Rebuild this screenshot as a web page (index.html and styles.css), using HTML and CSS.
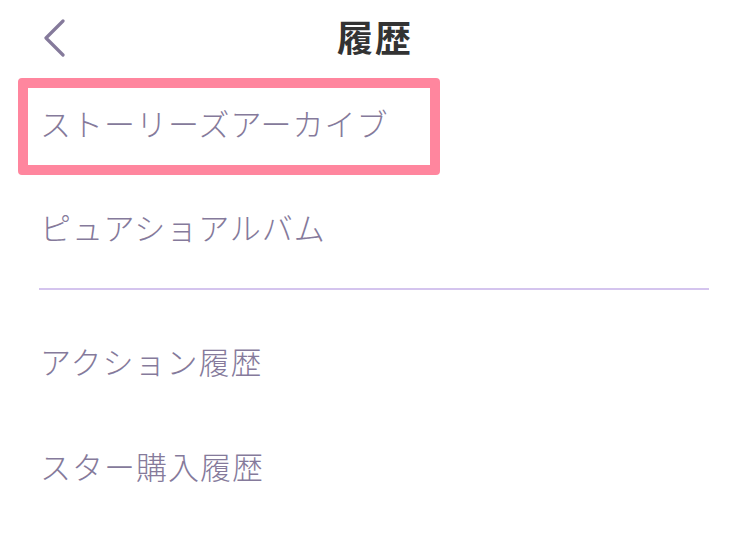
FILE: index.html
```html
<!DOCTYPE html>
<html lang="ja">
<head>
<meta charset="utf-8">
<title>履歴</title>
<link rel="stylesheet" href="styles.css">
</head>
<body>
<div class="screen">
  <header class="topbar">
    <div class="back">
      <svg width="24" height="38" viewBox="0 0 24 38"><path d="M20 2 L3 19 L20 36" fill="none" stroke="#857a9b" stroke-width="3.2" stroke-linecap="round" stroke-linejoin="round"/></svg>
    </div>
    <h1 class="title">履歴</h1>
    <div class="spacer"></div>
  </header>
  <ul class="menu">
    <li class="item item-highlight">ストーリーズアーカイブ</li>
    <li class="item">ピュアショアルバム</li>
  </ul>
  <div class="divider"></div>
  <ul class="menu menu-second">
    <li class="item">アクション履歴</li>
    <li class="item">スター購入履歴</li>
  </ul>
</div>
</body>
</html>
```

FILE: styles.css
```css
html, body {
  margin: 0;
  padding: 0;
  background: #ffffff;
}
.screen {
  width: 750px;
  height: 550px;
  font-family: "Noto Sans CJK JP", "Noto Sans", sans-serif;
  overflow: hidden;
}
.topbar {
  height: 78px;
  display: grid;
  grid-template-columns: 1fr auto 1fr;
  align-items: start;
}
.back {
  padding-left: 43px;
  padding-top: 19px;
}
.back svg { display: block; }
.title {
  margin: 0;
  padding-top: 10px;
  font-size: 36px;
  line-height: 52px;
  font-weight: 700;
  color: #333333;
  letter-spacing: 2px;
}
.menu {
  list-style: none;
  margin: 0;
  padding: 0;
}
.item {
  height: 104px;
  display: flex;
  align-items: center;
  padding-left: 40px;
  padding-bottom: 4px;
  font-size: 31px;
  font-weight: 300;
  color: #857a9b;
  letter-spacing: 1px;
  box-sizing: border-box;
}
.item-highlight {
  height: 97px;
  width: 422px;
  margin-left: 18px;
  border: 10px solid #ff869e;
  border-radius: 4px;
  padding-left: 12px;
  padding-bottom: 8px;
}
.menu > .item:nth-child(2) {
  margin-top: 1px;
}
.divider {
  margin: 8px 41px 0 39px;
  height: 2px;
  background: #d4c4ee;
}
.menu-second {
  margin-top: 20px;
}
```
